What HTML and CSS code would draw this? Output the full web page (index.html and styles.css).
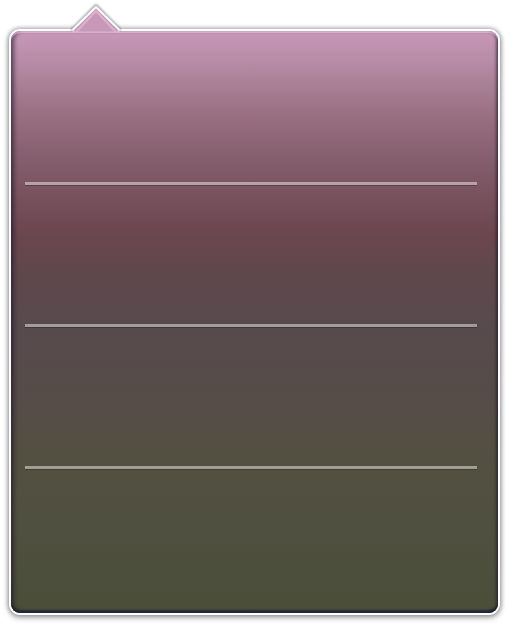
FILE: index.html
```html
<!DOCTYPE html>
<html>
<head>
<meta charset="utf-8">
<link rel="stylesheet" href="styles.css">
</head>
<body>
<div class="stage">
  <div class="popover">
    <svg class="arrow" width="60" height="30" viewBox="0 0 60 30">
      <defs>
        <filter id="blur" x="-20%" y="-20%" width="140%" height="140%">
          <feGaussianBlur stdDeviation="1.3"/>
        </filter>
      </defs>
      <polyline points="6,22 30,-2 54,22" fill="none" stroke="rgba(60,60,70,0.55)" stroke-width="3" filter="url(#blur)"/>
      <polygon points="8,22 30,0 52,22 52,23 8,23" fill="#c898b8"/>
      <polyline points="6,24 10,24 30,3 50,24 54,24" fill="none" stroke="#dbb3cf" stroke-width="2" stroke-linejoin="round"/>
      <polyline points="6.5,22 30,-1 53.5,22" fill="none" stroke="#ffffff" stroke-width="2" stroke-linejoin="round"/>
    </svg>
    <div class="inner">
      <div class="row row-first"></div>
      <div class="sep"></div>
      <div class="row"></div>
      <div class="sep"></div>
      <div class="row"></div>
      <div class="sep"></div>
      <div class="row row-last"></div>
    </div>
  </div>
</div>
</body>
</html>
```

FILE: styles.css
```css
html, body {
  margin: 0;
  padding: 0;
  background: #ffffff;
  font-family: "Liberation Sans", Arial, sans-serif;
}

.stage {
  width: 510px;
  height: 624px;
  padding: 29px 0 0 9px;
  box-sizing: border-box;
}

.popover {
  position: relative;
  width: 491px;
  height: 586px;
  box-sizing: border-box;
  border: 2px solid #ffffff;
  border-radius: 11px;
  box-shadow: 0 0 4px 1px rgba(60, 60, 70, 0.45), 0 3px 6px rgba(0, 0, 0, 0.25);
  background: #ffffff;
}

.arrow {
  position: absolute;
  left: 55px;
  top: -23px;
  z-index: 2;
  overflow: visible;
}

.inner {
  height: 100%;
  border-radius: 9px;
  overflow: hidden;
  display: flex;
  flex-direction: column;
  background: linear-gradient(to bottom,
    #c898b8 0%,
    #b48aa4 6%,
    #9a7082 14%,
    #805a68 24%,
    #6b464e 35%,
    #5e484c 42%,
    #574a4c 52%,
    #554c48 62%,
    #535040 75%,
    #4f5040 86%,
    #4a4e38 100%);
  box-shadow:
    inset 0 2px 0 rgba(240, 205, 230, 0.55),
    inset 4px 0 4px -1px rgba(30, 20, 40, 0.6),
    inset -3px 0 3px -1px rgba(30, 20, 40, 0.6),
    inset 0 -4px 2px -1px rgba(30, 40, 60, 0.9);
}

.row {
  height: 139px;
  flex: none;
}

.row-first {
  height: 151px;
}

.row-last {
  flex: 1;
}

.sep {
  flex: none;
  height: 3px;
  margin: 0 21px 0 14px;
  background: rgba(255, 255, 255, 0.45);
  box-shadow: 0 1px 0 rgba(20, 20, 30, 0.35);
}
```
